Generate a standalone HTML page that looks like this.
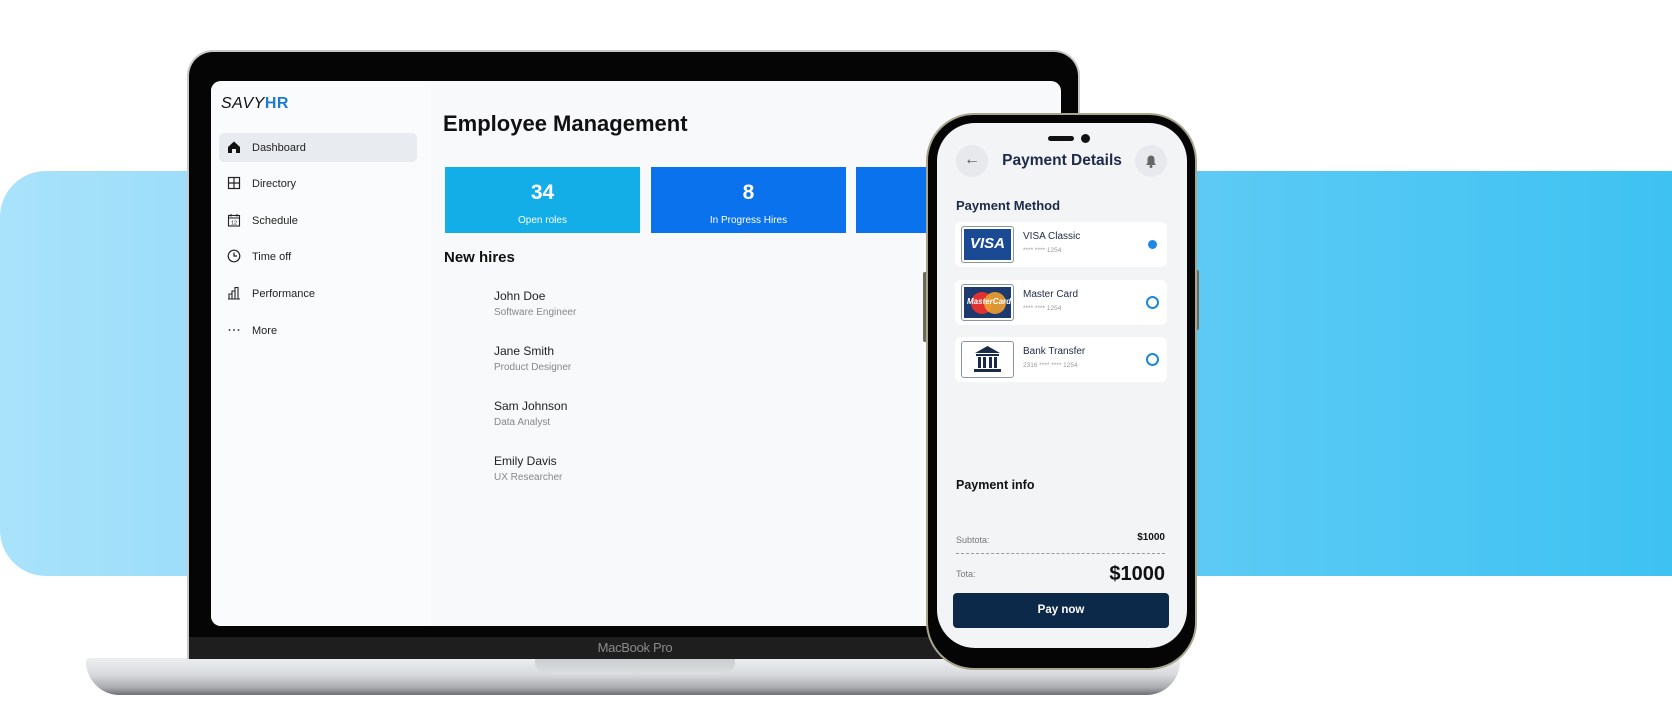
<!DOCTYPE html>
<html><head><meta charset="utf-8"><style>
*{margin:0;padding:0;box-sizing:border-box}
body{width:1672px;height:719px;background:#fff;position:relative;overflow:hidden;font-family:"Liberation Sans",sans-serif}
.a{position:absolute}
.band{left:0;top:171px;width:1672px;height:405px;border-radius:46px 0 0 46px;background:linear-gradient(90deg,#a9e2fb 0%,#7fd3f7 40%,#3ec2f2 100%)}
.nav{left:219px;width:198px;height:29px;border-radius:5px;font-size:11px;color:#222;display:flex;align-items:center;padding-left:33px}
.nav svg{position:absolute;left:8px;top:7px}
.nm{font-size:12px;color:#222;left:494px}
.rl{font-size:10px;color:#888;left:494px}
.row{left:955px;width:212px;height:45px;background:#fff;border-radius:6px}
.logo{position:absolute;left:6px;top:4px;width:53px;height:37px;border:1px solid #8a95a5;border-radius:3px;background:#fff}
.rt{position:absolute;left:68px;top:9px;font-size:10px;color:#1e2a44}
.rs{position:absolute;left:68px;top:25px;font-size:6.5px;color:#999}
.radio{position:absolute;left:191px;top:16px;width:13px;height:13px;border-radius:50%;border:2px solid #1e88d8}
</style></head><body>
<div class="a band"></div>

<div class="a" style="left:86px;top:658px;width:1094px;height:37px;border-radius:4px 4px 40px 40px;background:linear-gradient(#eceef0 0%,#d8dadd 45%,#a9abaf 80%,#6e7073 100%)"></div>
<div class="a" style="left:535px;top:658px;width:200px;height:16px;border-radius:0 0 12px 12px;background:linear-gradient(#c9cbce,#dcdee0)"></div>
<div class="a" style="left:187px;top:50px;width:893px;height:609px;border-radius:26px 26px 0 0;background:#050505;border:2px solid #c8c8c8;border-bottom:none"></div>
<div class="a" style="left:189px;top:637px;width:889px;height:22px;background:#1e1e1e"></div>
<div class="a" style="left:560px;top:640px;width:150px;text-align:center;font-size:13px;color:#8a8a8a;letter-spacing:-0.3px">MacBook Pro</div>
<div class="a" style="left:211px;top:81px;width:850px;height:545px;border-radius:10px;background:#f7f9fb;overflow:hidden">
  <div class="a" style="left:0;top:0;width:220px;height:545px;background:#fafbfc"></div>
</div>
<div class="a" style="left:221px;top:95px;font-size:16px;font-style:italic;color:#111;letter-spacing:0.5px">SAVY<b style="color:#1d7ad6;font-style:normal">HR</b></div>

<div class="a nav" style="top:133px;background:#e8ebef"><svg width="14" height="14" viewBox="0 0 14 14"><path d="M1 7L7 1.5 13 7V13H9V9H5V13H1Z" fill="#111"/></svg>Dashboard</div>
<div class="a nav" style="top:169px"><svg width="14" height="14" viewBox="0 0 14 14" fill="none" stroke="#222" stroke-width="1.2"><rect x="1.5" y="1.5" width="11" height="11"/><path d="M7 1.5V12.5M1.5 7H12.5"/></svg>Directory</div>
<div class="a nav" style="top:206px"><svg width="14" height="14" viewBox="0 0 14 14" fill="none" stroke="#222" stroke-width="1.1"><rect x="1.5" y="2.5" width="11" height="10.5"/><path d="M1.5 5H12.5M4 1V3.5M10 1V3.5"/><text x="4" y="11.5" font-size="5.5" fill="#222" stroke="none">12</text></svg>Schedule</div>
<div class="a nav" style="top:242px"><svg width="14" height="14" viewBox="0 0 14 14" fill="none" stroke="#222" stroke-width="1.2"><circle cx="7" cy="7" r="5.8"/><path d="M7 3.5V7H10"/></svg>Time off</div>
<div class="a nav" style="top:279px"><svg width="14" height="14" viewBox="0 0 14 14" fill="none" stroke="#222" stroke-width="1.1"><path d="M1 13H13M2 13V8H5V13M5 13V5H8V13M8 13V1.5H11V13"/></svg>Performance</div>
<div class="a nav" style="top:316px"><svg width="14" height="14" viewBox="0 0 14 14"><circle cx="2.5" cy="7" r="0.9" fill="#222"/><circle cx="7" cy="7" r="0.9" fill="#222"/><circle cx="11.5" cy="7" r="0.9" fill="#222"/></svg>More</div>

<div class="a" style="left:443px;top:111px;font-size:22px;font-weight:bold;color:#111">Employee Management</div>
<div class="a" style="left:445px;top:167px;width:195px;height:66px;background:#13ade8;color:#fff;text-align:center"><div style="font-size:21px;font-weight:bold;margin-top:14px">34</div><div style="font-size:10px;margin-top:10px">Open roles</div></div>
<div class="a" style="left:651px;top:167px;width:195px;height:66px;background:#0a72ec;color:#fff;text-align:center"><div style="font-size:21px;font-weight:bold;margin-top:14px">8</div><div style="font-size:10px;margin-top:10px">In Progress Hires</div></div>
<div class="a" style="left:856px;top:167px;width:80px;height:66px;background:#0a72ec"></div>
<div class="a" style="left:444px;top:249px;font-size:15px;font-weight:bold;color:#111">New hires</div>
<div class="a nm" style="top:289px">John Doe</div><div class="a rl" style="top:307px">Software Engineer</div>
<div class="a nm" style="top:344px">Jane Smith</div><div class="a rl" style="top:362px">Product Designer</div>
<div class="a nm" style="top:399px">Sam Johnson</div><div class="a rl" style="top:417px">Data Analyst</div>
<div class="a nm" style="top:454px">Emily Davis</div><div class="a rl" style="top:472px">UX Researcher</div>

<div class="a" style="left:923px;top:272px;width:5px;height:70px;background:#6b6a60;border-radius:2px"></div>
<div class="a" style="left:1195px;top:270px;width:4px;height:60px;background:#6b6a60;border-radius:2px"></div>
<div class="a" style="left:926px;top:113px;width:271px;height:557px;border-radius:48px;background:#050505;border:2px solid #a9a58e"></div>
<div class="a" style="left:937px;top:123px;width:250px;height:525px;border-radius:38px;background:#f3f4f6;overflow:hidden">
  <div class="a" style="left:111px;top:13px;width:26px;height:5px;border-radius:3px;background:#111"></div>
  <div class="a" style="left:144px;top:11px;width:9px;height:9px;border-radius:50%;background:#111"></div>
  <div class="a" style="left:19px;top:22px;width:32px;height:32px;border-radius:50%;background:#e8e9ec;text-align:center;line-height:30px;font-size:16px;color:#555">&#8592;</div>
  <div class="a" style="left:0;width:250px;top:29px;text-align:center;font-size:15.5px;font-weight:bold;color:#1e2a4a">Payment Details</div>
  <div class="a" style="left:198px;top:22px;width:32px;height:32px;border-radius:50%;background:#e8e9ec"><svg width="32" height="32" viewBox="0 0 32 32"><path d="M11 20H21L19.5 18V14A3.5 3.5 0 0 0 12.5 14V18Z" fill="#666"/><circle cx="16" cy="21.5" r="1.5" fill="#666"/></svg></div>
  <div class="a" style="left:19px;top:75px;font-size:13px;font-weight:bold;color:#1e2a4a">Payment Method</div>
  <div class="a" style="left:19px;top:355px;font-size:12.5px;font-weight:bold;color:#111">Payment info</div>
  <div class="a" style="left:19px;top:412px;font-size:9px;color:#777">Subtota:</div>
  <div class="a" style="right:22px;top:409px;font-size:10px;font-weight:bold;color:#111">$1000</div>
  <div class="a" style="left:19px;top:430px;width:209px;border-top:1px dashed #999"></div>
  <div class="a" style="left:19px;top:446px;font-size:9px;color:#777">Tota:</div>
  <div class="a" style="right:22px;top:440px;font-size:20px;font-weight:bold;color:#111">$1000</div>
  <div class="a" style="left:16px;top:470px;width:216px;height:35px;border-radius:4px;background:#0c2949;color:#fff;font-size:11.5px;font-weight:bold;text-align:center;line-height:35px">Pay now</div>
</div>
<div class="a row" style="top:222px"><div class="logo" style="padding:2px"><div style="background:#1a4a94;height:100%;color:#fff;font-weight:bold;font-style:italic;font-size:15px;text-align:center;line-height:30px">VISA</div></div><div class="rt">VISA Classic</div><div class="rs">**** **** 1254</div><div class="radio" style="border-color:transparent"><div style="width:9px;height:9px;margin:0;border-radius:50%;background:#1e88e8"></div></div></div>
<div class="a row" style="top:280px"><div class="logo" style="padding:2px"><div style="background:#1c3a6e;height:100%;position:relative"><div class="a" style="left:7px;top:5px;width:22px;height:22px;border-radius:50%;background:#e0322f"></div><div class="a" style="left:20px;top:5px;width:22px;height:22px;border-radius:50%;background:#f0a030;opacity:.9"></div><div class="a" style="left:3px;top:10px;font-size:8px;font-style:italic;font-weight:bold;color:#fff">MasterCard</div></div></div><div class="rt">Master Card</div><div class="rs">**** **** 1254</div><div class="radio"></div></div>
<div class="a row" style="top:337px"><div class="logo"><svg width="51" height="35" viewBox="0 0 51 35"><path d="M25.5 4L38 11H13Z" fill="#1c2a4a"/><rect x="14" y="12" width="23" height="2" fill="#1c2a4a"/><rect x="16" y="15" width="3" height="11" fill="#1c2a4a"/><rect x="21" y="15" width="3" height="11" fill="#1c2a4a"/><rect x="27" y="15" width="3" height="11" fill="#1c2a4a"/><rect x="32" y="15" width="3" height="11" fill="#1c2a4a"/><rect x="12" y="27" width="27" height="3" fill="#1c2a4a"/></svg></div><div class="rt">Bank Transfer</div><div class="rs">2316 **** **** 1254</div><div class="radio"></div></div>
</body></html>
